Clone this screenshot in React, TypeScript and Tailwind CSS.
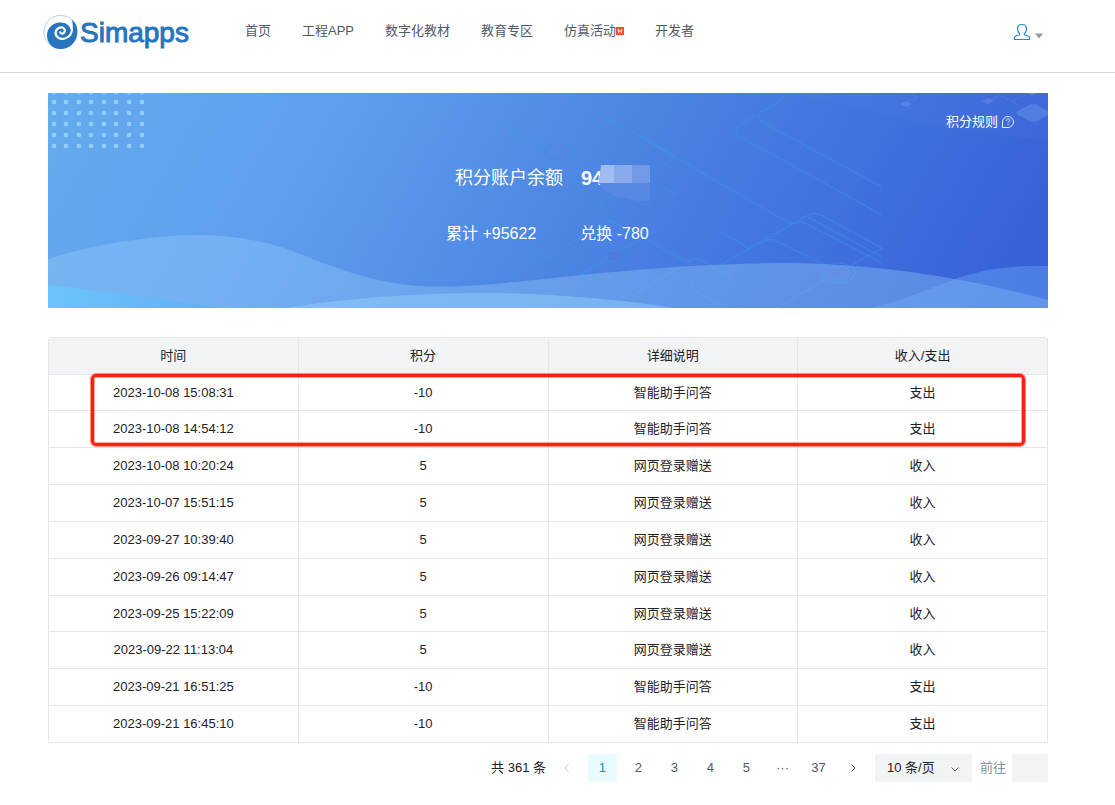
import React from "react";

const navItems = [
  { label: "首页" },
  { label: "工程APP" },
  { label: "数字化教材" },
  { label: "教育专区" },
  { label: "仿真活动", hot: true },
  { label: "开发者" },
];

const records = [
  ["2023-10-08 15:08:31", "-10", "智能助手问答", "支出"],
  ["2023-10-08 14:54:12", "-10", "智能助手问答", "支出"],
  ["2023-10-08 10:20:24", "5", "网页登录赠送", "收入"],
  ["2023-10-07 15:51:15", "5", "网页登录赠送", "收入"],
  ["2023-09-27 10:39:40", "5", "网页登录赠送", "收入"],
  ["2023-09-26 09:14:47", "5", "网页登录赠送", "收入"],
  ["2023-09-25 15:22:09", "5", "网页登录赠送", "收入"],
  ["2023-09-22 11:13:04", "5", "网页登录赠送", "收入"],
  ["2023-09-21 16:51:25", "-10", "智能助手问答", "支出"],
  ["2023-09-21 16:45:10", "-10", "智能助手问答", "支出"],
];

const columns = ["时间", "积分", "详细说明", "收入/支出"];

function Logo() {
  return (
    <a href="#" aria-label="Simapps" className="flex items-start gap-px text-[#2775bd]">
      <svg viewBox="0 0 36 36" className="size-9" fill="none">
        <circle cx="17.500" cy="18" r="16.600" stroke="#9fbfde" strokeWidth="0.8" />
        <path
          d="M29 5.500C33 9 34.800 14 34.200 20C33 29 26 35 17.500 35C9.500 35 4 29 4 21.500C4 13.500 10 9 17 8.500C22.500 8.200 26.500 11 27.500 15.500C29.800 12.500 30 9 29 5.500Z"
          fill="#2775bd"
        />
        <path
          d="M28.500 11C30 17.500 27.500 22.500 22.500 24.300C17.500 26 12.500 23.500 12.600 18.800C12.800 13.300 20.800 11.500 21.800 16C22.300 19.300 18 21 17.200 18.300"
          stroke="white"
          strokeWidth="2.200"
          strokeLinecap="round"
        />
      </svg>
      <span className="pt-px text-[28px] leading-9 [-webkit-text-stroke:1px_currentColor]">Simapps</span>
    </a>
  );
}

function Header() {
  return (
    <header className="flex h-[73px] items-start border-b border-[#d8d8d8] pr-[72px] pl-[43px]">
      <div className="w-[202px] pt-[14px]">
        <Logo />
      </div>
      <nav className="flex gap-[31px] pt-[21px] text-[13px] leading-5 text-[#4e5969]">
        {navItems.map((item) => (
          <a key={item.label} href="#" className="flex items-center whitespace-nowrap">
            {item.label}
            {item.hot && (
              <svg viewBox="0 0 8 8" className="size-2">
                <path d="M0 0H8V8H0Z" fill="#ff4d2d" />
                <path d="M2.500 2V6M5.500 2V6M2.500 4H5.500" stroke="white" strokeWidth="0.9" />
              </svg>
            )}
          </a>
        ))}
      </nav>
      <button aria-label="账户" className="mt-[23px] ml-auto flex items-center gap-1">
        <svg viewBox="0 0 18 18" className="size-[18px]" fill="none" stroke="#1890d0" strokeWidth="1.200">
          <path d="M1.500 16.500V14.500C1.500 13.500 2.500 13 6.500 11.700V10.500C5 9.500 4.500 7.500 4.500 5.500C4.500 3 6 1.500 9 1.500S13.500 3 13.500 5.500C13.500 7.500 13 9.500 11.500 10.500V11.700C15.500 13 16.500 13.500 16.500 14.500V16.500Z" />
        </svg>
        <svg viewBox="0 0 8 6" className="mt-2 h-[6px] w-2">
          <path d="M0 0.500H8L4 5.500Z" fill="#999" />
        </svg>
      </button>
    </header>
  );
}

function BannerArt() {
  const dotColumns = [6, 18, 31, 43, 56, 68, 81, 94];
  const dotRows = [-1, 9, 20, 31, 42, 53];
  return (
    <svg
      viewBox="0 0 1000 215"
      preserveAspectRatio="none"
      className="absolute inset-0 size-full"
      fill="none"
      aria-hidden="true"
    >
      <defs>
        <linearGradient id="corner" x1="0" y1="0" x2="1" y2="0">
          <stop offset="0" stopColor="#6cc5fa" />
          <stop offset="1" stopColor="#61adf6" />
        </linearGradient>
      </defs>
      <path d="M740 0L890 33L1000 48V0Z" fill="#fff" fillOpacity="0.02" />
      {dotRows.map((y) =>
        dotColumns.map((x) => <circle key={`${x}-${y}`} cx={x} cy={y} r="2.300" fill="#92d0fa" />),
      )}
      <g stroke="#2ea3f2" strokeOpacity="0.5" strokeWidth="1">
        <path d="M515 0L624 61Q626 67 616 72" />
        <path d="M451 30L495 53M522 51L558 29Q562 26 567 30" />
        <path d="M592 43L682 96L738 128Q743 132 755 129L834 170" />
        <path d="M615 95L629 101" />
        <path d="M563 102L549 111Q544 116 550 121L636 167Q640 169 644 167" />
        <path d="M564 127L452 190" />
        <path d="M475 149L573 203Q578 206 583 203L644 167Q649 164 655 168L682 183" />
        <path d="M533 181L560 165M575 156L608 138" />
        <path d="M672 212L646 197Q640 192 646 187L760 122Q766 119 773 122L834 155" />
        <path d="M674 140L696 152Q702 156 697 160" />
        <path d="M733 0Q736 6 731 9L691 32Q685 37 691 43L834 122" />
        <path d="M711 22Q709 26 714 29L834 94" />
        <path d="M760 124L834 164" />
        <path d="M713 151Q722 143 730 149L778 172M804 172L834 155M777 187L729 215" />
        <ellipse cx="509" cy="59" rx="17" ry="10" strokeOpacity="0.3" />
        <ellipse cx="567" cy="163" rx="10" ry="6" strokeOpacity="0.3" />
        <ellipse cx="790" cy="180" rx="17" ry="10" strokeOpacity="0.4" />
        <ellipse cx="790" cy="180" rx="12" ry="7" strokeOpacity="0.4" />
      </g>
      <g fill="#7568e0" fillOpacity="0.2" stroke="#7568e0" strokeOpacity="0.3">
        <ellipse cx="509" cy="59" rx="13" ry="7" fill="none" />
        <ellipse cx="567" cy="163" rx="6" ry="3" />
        <ellipse cx="790" cy="180" rx="12" ry="6" stroke="none" />
      </g>
      <g fill="#7ca4f2" fillOpacity="0.35">
        <path d="M852 11L858 8L864 11L858 14Z" />
        <path d="M934 8L940 5L946 8L940 11Z" />
        <path d="M970 18L981 12Q985 10 989 12L1000 18V22L989 28Q985 30 981 28L970 22Q967 20 970 18Z" />
        <path d="M978 0H990L984 3Z" />
      </g>
      <path d="M858 9L870 4L863 0M940 8L952 2L972 13M964 8L980 0" stroke="#7ca4f2" strokeOpacity="0.2" />
      <path
        d="M0 166C50 150 100 143 150 142C185 142 220 148 250 160C290 177 330 190 370 193C450 198 560 171 740 170C840 171 930 188 1000 207V215H0Z"
        fill="#9bd0f8"
        fillOpacity="0.34"
      />
      <path d="M0 192Q90 202 170 215H0Z" fill="url(#corner)" />
      <path d="M237 215C330 200 440 196 530 204Q585 208 625 215Z" fill="#9bd8fb" fillOpacity="0.4" />
      <path d="M822 215C880 202 905 180 955 175Q978 172 1000 173V215Z" fill="#72b0fb" fillOpacity="0.38" />
    </svg>
  );
}

function Banner() {
  return (
    <section className="relative h-[215px] bg-[linear-gradient(120deg,#64abee_0%,#5e9fee_26%,#4f88e4_50%,#4377df_70%,#375dd7_100%)] text-white">
      <BannerArt />
      <div className="relative flex justify-end pt-[19px] pr-[34px]">
        <a href="#" className="flex items-center gap-1 text-[13px] leading-5">
          积分规则
          <svg viewBox="0 0 12 12" className="size-3" fill="none" stroke="white" strokeOpacity="0.85">
            <path d="M0.500 11.500V6A5.500 5.500 0 1 1 6 11.500Z" />
            <path d="M4.300 4.800C4.300 2.500 7.700 2.500 7.700 4.500C7.700 5.700 6 5.700 6 7M6 8V9" />
          </svg>
        </a>
      </div>
      <div className="relative mt-8 flex h-9 items-start pl-[407px]">
        <span className="text-[18px] leading-7">积分账户余额</span>
        <div className="relative ml-[18px]">
          <strong className="text-[20px] leading-7">94</strong>
          <svg viewBox="0 0 51 36" className="absolute top-px left-[18px] h-9 w-[51px]" aria-hidden="true">
            <path d="M2 0H51V36H40Q32 35 27 33Q8 32 0 18Z" fill="#5888e4" />
            <path d="M2 0H15V18H0Z" fill="#a1bcf0" />
            <path d="M15 0H33V18H15Z" fill="#8aabeb" />
            <path d="M33 0H51V18H33Z" fill="#7199e7" />
          </svg>
        </div>
      </div>
      <div className="relative mt-[22px] flex gap-11 pl-[398px] text-[16px] leading-6">
        <span>累计 +95622</span>
        <span>兑换 -780</span>
      </div>
    </section>
  );
}

function RecordTable() {
  return (
    <div className="relative mt-[29px]">
      <table className="w-full table-fixed border-separate border-spacing-0 rounded-sm border-t border-l border-[#e5e6eb] text-center text-[13px] leading-5 text-[#1d2129]">
        <thead>
          <tr className="h-[37px] bg-[#f2f3f5]">
            {columns.map((name) => (
              <th key={name} className="border-r border-b border-[#e5e6eb] p-0 font-normal">
                {name}
              </th>
            ))}
          </tr>
        </thead>
        <tbody>
          {records.map((row) => (
            <tr key={row[0]} className="h-[37px] first:h-9 nth-[7]:h-9">
              {row.map((cell, i) => (
                <td key={i} className="border-r border-b border-[#e5e6eb] p-0">
                  {cell}
                </td>
              ))}
            </tr>
          ))}
        </tbody>
      </table>
      <div className="pointer-events-none absolute top-[37px] right-[23px] left-[43px] h-[72px] rounded-[5px] border-3 border-[#ff1f10] shadow-[0_0_0_1px_#ff1f1080,inset_0_0_0_1px_#ff1f1060]" />
    </div>
  );
}

function Chevron({ d, className }: { d: string; className: string }) {
  return (
    <svg viewBox="0 0 10 10" className={className} fill="none" stroke="currentColor">
      <path d={d} />
    </svg>
  );
}

function Pagination() {
  return (
    <div className="mt-[11px] flex h-7 items-center justify-end text-[13px] leading-5 text-[#4e5969]">
      <span className="mr-[6px] text-[#1d2129]">共 361 条</span>
      <nav className="flex items-center gap-[7px]" aria-label="分页">
        <button aria-label="上一页" disabled className="flex h-7 w-[29px] items-center justify-center text-[#c9cdd4]">
          <Chevron d="M7.500 1.500L4 5L7.500 8.500" className="size-[10px]" />
        </button>
        {["1", "2", "3", "4", "5", "···", "37"].map((page) => (
          <button
            key={page}
            aria-current={page === "1" ? "page" : undefined}
            className="h-7 w-[29px] rounded-xs aria-[current=page]:bg-[#e8fbff] aria-[current=page]:text-[#1890d0]"
          >
            {page}
          </button>
        ))}
        <button aria-label="下一页" className="flex h-7 w-[29px] items-center justify-center">
          <Chevron d="M2.500 1.500L6 5L2.500 8.500" className="size-[10px]" />
        </button>
      </nav>
      <div className="relative ml-[6px]">
        <select
          aria-label="每页条数"
          className="h-7 w-[97px] appearance-none rounded-xs bg-[#f2f3f5] pl-3 text-[13px] text-[#1d2129]"
        >
          <option>10 条/页</option>
        </select>
        <Chevron d="M1.500 3.500L5 7L8.500 3.500" className="pointer-events-none absolute top-[10px] right-3 size-[10px]" />
      </div>
      <label htmlFor="jump" className="ml-2 text-[#86909c]">
        前往
      </label>
      <input id="jump" className="ml-[6px] h-7 w-9 rounded-xs bg-[#f2f3f5] px-2" />
    </div>
  );
}

export default function App() {
  return (
    <div className="bg-white pb-6 font-['Liberation_Sans','Noto_Sans_CJK_SC',sans-serif]">
      <Header />
      <main className="mt-5 pr-[67px] pl-12">
        <Banner />
        <RecordTable />
        <Pagination />
      </main>
    </div>
  );
}
